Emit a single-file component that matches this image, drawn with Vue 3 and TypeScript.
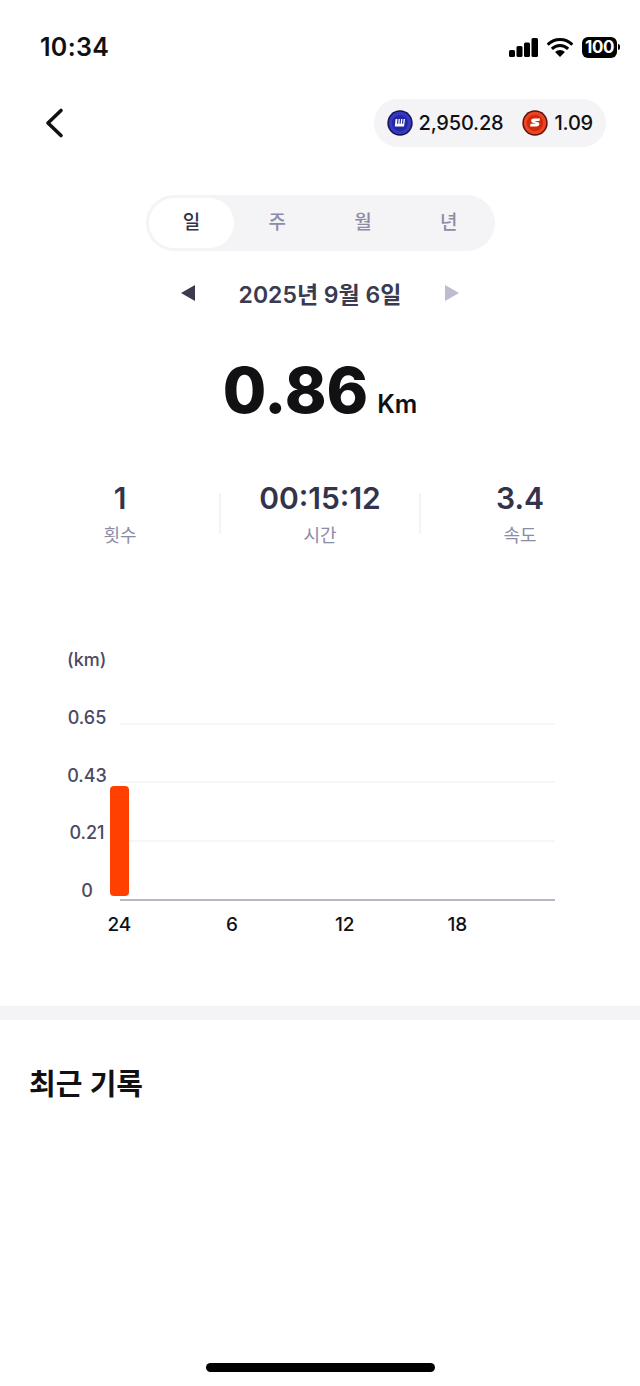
<script setup lang="ts">
const tabs = ['일', '주', '월', '년']
const stats = [
  { value: '1', label: '횟수' },
  { value: '00:15:12', label: '시간' },
  { value: '3.4', label: '속도' },
]
const yLabels = ['0.65', '0.43', '0.21', '0']
const xLabels = ['24', '6', '12', '18']
</script>

<template>
  <div class="page">
    <div class="status">
      <span class="clock">10:34</span>
      <div class="status-icons">
        <svg width="29" height="19" viewBox="0 0 29 19">
          <rect x="0" y="12" width="6" height="7" rx="1.5" />
          <rect x="7.5" y="8" width="6" height="11" rx="1.5" />
          <rect x="15" y="4.5" width="6" height="14.5" rx="1.5" />
          <rect x="22.5" y="0" width="6.5" height="19" rx="1.5" />
        </svg>
        <svg width="26" height="19" viewBox="0 0 26 19">
          <path d="M.63 6.63a17.5 17.5 0 0 1 24.74 0" fill="none" stroke="#000" stroke-width="3" />
          <path d="M4.87 10.87a11.5 11.5 0 0 1 16.26 0" fill="none" stroke="#000" stroke-width="3" />
          <path d="M8.05 14.05a7 7 0 0 1 9.9 0L13 19Z" />
        </svg>
        <div class="battery">
          <span class="battery-body">100</span>
          <span class="battery-tip"></span>
        </div>
      </div>
    </div>

    <div class="nav">
      <svg class="back" width="24" height="34" viewBox="0 0 24 34">
        <path d="M18 4.5 5 17l13 12.5" fill="none" stroke="#111114" stroke-width="3.6" stroke-linecap="round" stroke-linejoin="round" />
      </svg>
      <div class="wallet">
        <svg width="26" height="26" viewBox="0 0 26 26">
          <circle cx="13" cy="13" r="12.7" fill="#14144e" />
          <circle cx="13" cy="13" r="11.2" fill="#3438c4" />
          <circle cx="13" cy="13" r="8" fill="#2427a0" />
          <path d="M8.6 9h9.4l-1 7.6H7.8Z" fill="#fff" />
          <path d="M11 9l-.4 4.8M13.5 9l-.4 4.8M16 9l-.4 4.8" stroke="#2427a0" stroke-width="1.2" />
        </svg>
        <span class="amount">2,950.28</span>
        <svg class="coin-two" width="26" height="26" viewBox="0 0 26 26">
          <circle cx="13" cy="13" r="12.7" fill="#5a1408" />
          <circle cx="13" cy="13" r="11.2" fill="#ee4426" />
          <circle cx="13" cy="13" r="8.2" fill="#cf2a0a" />
          <path d="M18 8.6h-5.8c-2 0-3 .9-3 2.2 0 1.2.8 1.8 2 2.1l2.2.5c.4.1.4.4 0 .4H8.6l-.6 2.6h6c2.2 0 3.4-.9 3.4-2.4 0-1.2-.8-1.9-2-2.1l-2-.5c-.4-.1-.4-.4.1-.4h3.9Z" fill="#fff" />
        </svg>
        <span class="amount">1.09</span>
      </div>
    </div>

    <div class="segment">
      <div v-for="(tab, i) in tabs" :key="tab" class="tab" :class="{ active: i === 0 }">{{ tab }}</div>
    </div>

    <div class="date-row">
      <svg width="14" height="16" viewBox="0 0 14 16"><path d="M14 0v16L0 8Z" fill="#3a3a50" /></svg>
      <span class="date">2025년 9월 6일</span>
      <svg width="14" height="16" viewBox="0 0 14 16"><path d="M0 0v16l14-8Z" fill="#bcbbd0" /></svg>
    </div>

    <div class="total">
      <span class="total-num">0.86</span>
      <span class="total-unit">Km</span>
    </div>

    <div class="stats">
      <template v-for="(s, i) in stats" :key="s.label">
        <div v-if="i > 0" class="sep"></div>
        <div class="stat">
          <div class="stat-value">{{ s.value }}</div>
          <div class="stat-label">{{ s.label }}</div>
        </div>
      </template>
    </div>

    <div class="chart">
      <div class="unit">(km)</div>
      <div class="plot">
        <div class="y-axis">
          <div v-for="y in yLabels" :key="y" class="y-label">{{ y }}</div>
        </div>
        <div class="grid-area">
          <div class="line"></div>
          <div class="line"></div>
          <div class="line"></div>
          <div class="baseline"></div>
          <div class="bar"></div>
        </div>
      </div>
      <div class="x-axis">
        <span v-for="x in xLabels" :key="x" class="x-label">{{ x }}</span>
      </div>
    </div>

    <div class="divider"></div>

    <div class="recent">최근 기록</div>

    <div class="home-bar"></div>
  </div>
</template>

<style scoped>
.page {
  position: relative;
  width: 640px;
  height: 1386px;
  overflow: hidden;
  background: #fff;
  color: #111114;
  font-family: Inter, "Noto Sans CJK KR", sans-serif;
}

.status {
  display: flex;
  align-items: center;
  justify-content: space-between;
  height: 30px;
  padding: 32px 20px 0 40px;
}
.clock {
  font-size: 25px;
  font-weight: 600;
  letter-spacing: 0.3px;
}
.status-icons {
  display: flex;
  align-items: center;
  gap: 9px;
}
.battery {
  display: flex;
  align-items: center;
  gap: 1px;
}
.battery-body {
  width: 35px;
  height: 21px;
  border-radius: 6px;
  background: #000;
  color: #fff;
  font-size: 17px;
  font-weight: 700;
  letter-spacing: -0.4px;
  line-height: 21px;
  text-align: center;
}
.battery-tip {
  width: 2px;
  height: 6px;
  border-radius: 0 2px 2px 0;
  background: #000;
}

.nav {
  display: flex;
  align-items: center;
  justify-content: space-between;
  height: 48px;
  margin-top: 37px;
  padding: 0 34px 0 43px;
}
.wallet {
  display: flex;
  align-items: center;
  height: 48px;
  padding: 0 13px;
  border-radius: 24px;
  background: #f4f4f7;
}
.amount {
  margin-left: 6px;
  font-size: 20px;
  font-weight: 500;
  letter-spacing: -0.2px;
}
.coin-two {
  margin-left: 19px;
}

.segment {
  display: flex;
  width: 349px;
  height: 56px;
  margin: 48px auto 0;
  padding: 3px;
  box-sizing: border-box;
  border-radius: 28px;
  background: #f4f4f7;
}
.tab {
  flex: 1;
  font-size: 19px;
  font-weight: 500;
  line-height: 50px;
  text-align: center;
  color: #8d8ca6;
}
.tab.active {
  border-radius: 25px;
  background: #fff;
  color: #33334a;
}

.date-row {
  display: flex;
  align-items: center;
  justify-content: center;
  gap: 44px;
  height: 34px;
  margin-top: 25px;
}
.date {
  font-size: 23px;
  font-weight: 600;
  color: #3a3a50;
}

.total {
  display: flex;
  align-items: baseline;
  justify-content: center;
  height: 78px;
  margin-top: 41px;
}
.total-num {
  font-size: 63px;
  font-weight: 800;
  line-height: 78px;
  color: #111114;
}
.total-unit {
  margin-left: 9px;
  font-size: 25px;
  font-weight: 600;
}

.stats {
  display: flex;
  align-items: center;
  margin-top: 50px;
  padding: 0 20px;
}
.stat {
  flex: 1;
  text-align: center;
}
.sep {
  flex: none;
  width: 2px;
  height: 41px;
  margin: 0 -1px;
  background: #f4f4f7;
}
.stat-value {
  font-size: 30px;
  font-weight: 600;
  line-height: 38px;
  color: #33334a;
}
.stat-label {
  margin-top: 7px;
  font-size: 18px;
  line-height: 24px;
  color: #8d8ca6;
}

.chart {
  margin-top: 100px;
  padding-left: 67px;
}
.unit {
  font-size: 18px;
  font-weight: 500;
  line-height: 24px;
  color: #4a4a62;
}
.plot {
  display: flex;
  margin-top: 34px;
}
.y-axis {
  flex: none;
  width: 40px;
  text-align: center;
}
.y-label {
  height: 57.5px;
  font-size: 18px;
  font-weight: 500;
  line-height: 24px;
  color: #4a4a62;
}
.y-label:last-child {
  height: 24px;
}
.grid-area {
  position: relative;
  width: 435px;
  height: 178px;
  margin-left: 13px;
  margin-top: 17px;
}
.line {
  height: 2px;
  margin-bottom: 57px;
  background: #f6f6f8;
}
.line:first-child {
  margin-bottom: 56px;
}
.baseline {
  position: absolute;
  left: 0;
  right: 0;
  bottom: 0;
  height: 2px;
  background: #b8b7c8;
}
.bar {
  position: absolute;
  left: -10px;
  bottom: 5px;
  width: 19px;
  height: 110px;
  border-radius: 4px;
  background: #ff4000;
}
.x-axis {
  display: flex;
  margin-top: 10.5px;
  margin-left: -4px;
}
.x-label {
  width: 112.7px;
  font-size: 19px;
  font-weight: 500;
  line-height: 24px;
  text-align: center;
}

.divider {
  height: 14px;
  margin-top: 69px;
  background: #f4f4f7;
}
.recent {
  margin-top: 45px;
  padding-left: 29px;
  font-size: 29px;
  font-weight: 600;
  line-height: 40px;
}

.home-bar {
  position: absolute;
  left: 206px;
  bottom: 14px;
  width: 229px;
  height: 9px;
  border-radius: 5px;
  background: #000;
}
</style>
